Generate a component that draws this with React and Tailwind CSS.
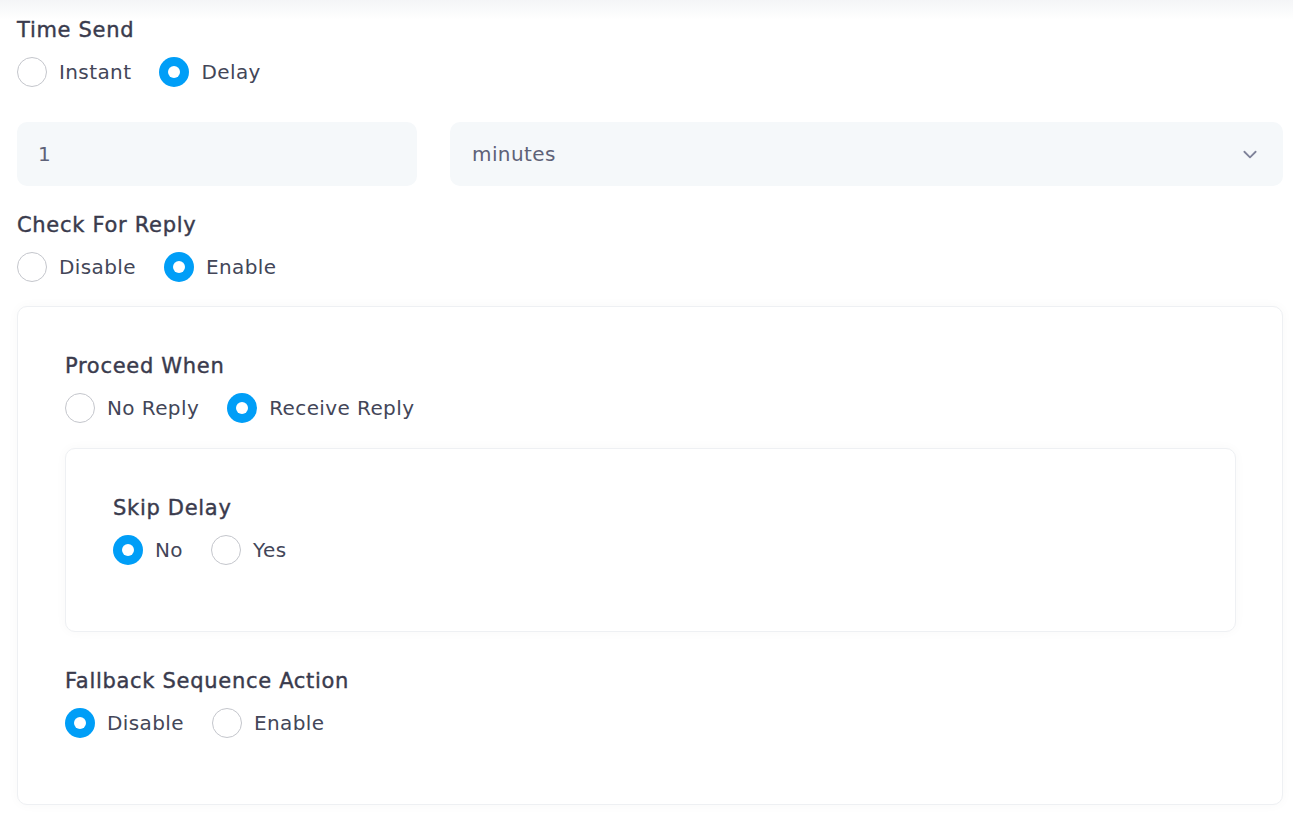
import React from 'react'

function Radio({ label, checked }) {
  return (
    <label className="mr-7 flex items-center">
      {checked ? (
        <span className="flex h-[30px] w-[30px] items-center justify-center rounded-full bg-[#009ef7]">
          <span className="h-3 w-3 rounded-full bg-white" />
        </span>
      ) : (
        <span className="h-[30px] w-[30px] rounded-full border border-[#c4c6cc] bg-white" />
      )}
      <span className="ml-3 text-[20px] leading-[30px] tracking-[0.4px] text-[#434658]">{label}</span>
    </label>
  )
}

function Group({ title, options, value }) {
  return (
    <div>
      <h3 className="text-[21px] leading-7 tracking-[0.7px] text-[#3a3b4d] [-webkit-text-stroke-width:0.4px]">{title}</h3>
      <div className="mt-[13px] flex">
        {options.map((o) => (
          <Radio key={o} label={o} checked={o === value} />
        ))}
      </div>
    </div>
  )
}

export default function App() {
  return (
    <div
      className="min-h-screen bg-white bg-gradient-to-b from-[#f4f5f7] to-white to-[20px] pl-[17px] pr-[10px] pt-4 pb-[14px]"
      style={{ fontFamily: '"DejaVu Sans", "Open Sans", sans-serif' }}
    >
      <Group title="Time Send" options={['Instant', 'Delay']} value="Delay" />

      <div className="mt-[35px] flex gap-[33px]">
        <div className="flex h-16 w-[400px] items-center rounded-[10px] bg-[#f5f8fa] px-[21px] text-[20px] tracking-[0.4px] text-[#5e6278]">
          1
        </div>
        <div className="flex h-16 flex-1 items-center justify-between rounded-[10px] bg-[#f5f8fa] pl-[22px] pr-6 text-[20px] tracking-[0.4px] text-[#5e6278]">
          <span>minutes</span>
          <svg width="18" height="18" viewBox="0 0 16 16" fill="none" stroke="#7e8299" strokeWidth="1.6" strokeLinecap="round" strokeLinejoin="round">
            <path d="M3 6l5 5 5-5" />
          </svg>
        </div>
      </div>

      <div className="mt-[25px]">
        <Group title="Check For Reply" options={['Disable', 'Enable']} value="Enable" />
      </div>

      <div className="mt-6 rounded-[10px] border border-[#eef0f3] bg-white pl-[47px] pr-[46px] pt-[45px] pb-[66px] shadow-[0_0_12px_rgba(0,0,0,0.03)]">
        <Group title="Proceed When" options={['No Reply', 'Receive Reply']} value="Receive Reply" />

        <div className="mt-[25px] rounded-[10px] border border-[#eef0f3] bg-white px-[47px] pt-[45px] pb-[66px] shadow-[0_0_12px_rgba(0,0,0,0.03)]">
          <Group title="Skip Delay" options={['No', 'Yes']} value="No" />
        </div>

        <div className="mt-[35px]">
          <Group title="Fallback Sequence Action" options={['Disable', 'Enable']} value="Disable" />
        </div>
      </div>
    </div>
  )
}
